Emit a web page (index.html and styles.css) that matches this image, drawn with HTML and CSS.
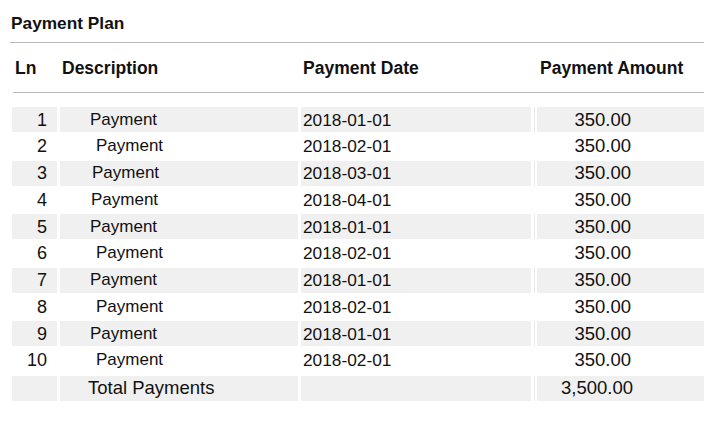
FILE: index.html
```html
<!DOCTYPE html>
<html>
<head>
<meta charset="utf-8">
<link rel="stylesheet" href="styles.css">
</head>
<body>
<div class="plan">
  <h1 class="title">Payment Plan</h1>
  <div class="head">
    <div class="h h-ln">Ln</div>
    <div class="h h-desc">Description</div>
    <div class="h h-date">Payment Date</div>
    <div class="h h-amt">Payment Amount</div>
  </div>
  <div class="rows">
    <div class="row odd"><div class="c ln">1</div><div class="c desc">Payment</div><div class="c date">2018-01-01</div><div class="c amt">350.00</div></div>
    <div class="row"><div class="c ln">2</div><div class="c desc off6">Payment</div><div class="c date">2018-02-01</div><div class="c amt">350.00</div></div>
    <div class="row odd"><div class="c ln">3</div><div class="c desc off2">Payment</div><div class="c date">2018-03-01</div><div class="c amt">350.00</div></div>
    <div class="row"><div class="c ln">4</div><div class="c desc off1">Payment</div><div class="c date">2018-04-01</div><div class="c amt">350.00</div></div>
    <div class="row odd"><div class="c ln">5</div><div class="c desc">Payment</div><div class="c date">2018-01-01</div><div class="c amt">350.00</div></div>
    <div class="row"><div class="c ln">6</div><div class="c desc off6">Payment</div><div class="c date">2018-02-01</div><div class="c amt">350.00</div></div>
    <div class="row odd"><div class="c ln">7</div><div class="c desc">Payment</div><div class="c date">2018-01-01</div><div class="c amt">350.00</div></div>
    <div class="row"><div class="c ln">8</div><div class="c desc off6">Payment</div><div class="c date">2018-02-01</div><div class="c amt">350.00</div></div>
    <div class="row odd"><div class="c ln">9</div><div class="c desc">Payment</div><div class="c date">2018-01-01</div><div class="c amt">350.00</div></div>
    <div class="row"><div class="c ln">10</div><div class="c desc off6">Payment</div><div class="c date">2018-02-01</div><div class="c amt">350.00</div></div>
    <div class="row odd total"><div class="c ln"></div><div class="c desc tot">Total Payments</div><div class="c date"></div><div class="c amt tot-amt">3,500.00</div></div>
  </div>
</div>
</body>
</html>
```

FILE: styles.css
```css
html, body {
  margin: 0;
  padding: 0;
  background: #fff;
}
body {
  font-family: "Liberation Sans", Arial, sans-serif;
  color: #111;
}
.plan {
  padding-left: 10px;
}
.title {
  margin: 13px 0 0 1px;
  font-size: 17.3px;
  line-height: 20px;
  font-weight: bold;
  height: 20px;
}
.head {
  margin-top: 9px;
  border-top: 1px solid #b8b8b8;
  display: grid;
  grid-template-columns: 47px 238px 230px 1fr;
  column-gap: 3px;
  height: 50px;
  align-items: center;
  position: relative;
}
.head::after {
  content: "";
  position: absolute;
  left: 3px;
  right: 0;
  bottom: 0;
  border-bottom: 1px solid #b8b8b8;
}
.h {
  font-size: 17.5px;
  font-weight: bold;
  line-height: 20px;
}
.h-ln { padding-left: 5px; }
.h-desc { padding-left: 2px; }
.h-date { padding-left: 2px; }
.h-amt { padding-left: 6px; }
.rows {
  margin-top: 14px;
  margin-left: 2px;
  display: grid;
  row-gap: 1.75px;
}
.row {
  display: grid;
  grid-template-columns: 45px 238px 230px 1fr;
  column-gap: 3px;
  height: 25px;
}
.row.total {
  margin-top: 1px;
}
.c {
  display: flex;
  align-items: center;
  line-height: 20px;
  white-space: nowrap;
}
.odd .ln, .odd .desc, .odd .date {
  background: #f0f0f0;
}
.odd .amt {
  background: linear-gradient(to right, #e8e8e8 0 1px, #fff 1px 3px, #f0f0f0 3px);
}
.ln {
  justify-content: flex-end;
  padding-right: 10px;
  font-size: 18px;
}
.desc {
  padding-left: 30px;
  font-size: 17px;
}
.desc.off1 { padding-left: 31px; }
.desc.off2 { padding-left: 32px; }
.desc.off6 { padding-left: 36px; }
.desc.tot {
  padding-left: 28px;
  font-size: 18.5px;
}
.date {
  padding-left: 2px;
  font-size: 17.3px;
}
.amt {
  justify-content: flex-end;
  padding-right: 73px;
  font-size: 18.5px;
}
.amt.tot-amt {
  padding-right: 71px;
}
```
